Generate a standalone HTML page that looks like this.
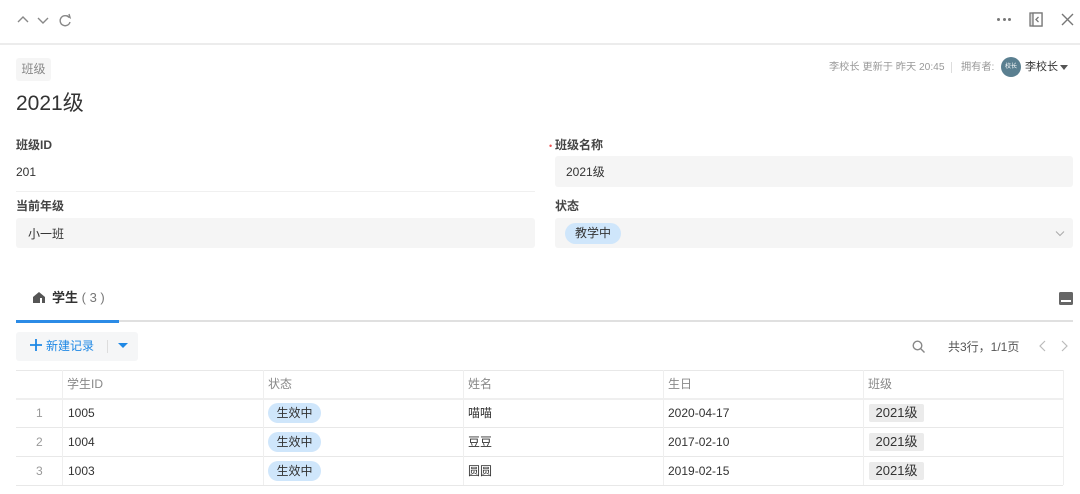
<!DOCTYPE html>
<html><head><meta charset="utf-8"><style>
*{margin:0;padding:0;box-sizing:border-box}
body{width:1080px;height:494px;background:#fff;font-family:"Liberation Sans","Noto Sans CJK SC",sans-serif;color:#333;position:relative;overflow:hidden;font-size:12px}
.a{position:absolute;line-height:14px;white-space:nowrap}
.lbl{font-size:12px;color:#444;font-weight:bold}
.box{background:#f5f5f5;border-radius:3px}
.pill{background:#cfe6fb;border-radius:11px;color:#333;text-align:center}
.gtag{background:#ebebeb;border-radius:2px;text-align:center;font-size:13px;color:#333}
.hl{position:absolute;left:16px;width:1047px;height:1px;background:#e8e8e8}
.vl{position:absolute;top:370px;height:115px;width:1px;background:#efefef}
</style></head><body>
<svg class="a" style="left:15px;top:12px" width="60" height="16" viewBox="0 0 60 16" fill="none" stroke="#888" stroke-width="1.4">
<path d="M3 10 L8 5 L13 10"/><path d="M23 6 L28 11 L33 6"/>
<path d="M54 5.5 A5 5 0 1 0 55 10" /><path d="M51.5 3.5 L55 5.5 L54 2"/>
</svg>
<div class="a" style="left:997px;top:18px;width:14px;height:4px;display:flex;justify-content:space-between"><i style="width:3px;height:3px;background:#777;border-radius:50%"></i><i style="width:3px;height:3px;background:#777;border-radius:50%"></i><i style="width:3px;height:3px;background:#777;border-radius:50%"></i></div>
<svg class="a" style="left:1029px;top:12px" width="14" height="15" viewBox="0 0 14 15" fill="none" stroke="#777" stroke-width="1.3"><rect x="1" y="1" width="12" height="13" fill="#ddd"/><rect x="4" y="1" width="9" height="13" fill="#fff"/><path d="M9.5 5 L7 7.5 L9.5 10"/></svg>
<svg class="a" style="left:1061px;top:13px" width="13" height="13" viewBox="0 0 13 13" stroke="#777" stroke-width="1.4"><path d="M1 1 L12 12 M12 1 L1 12"/></svg>
<div class="a" style="left:0;top:43px;width:1080px;height:2px;background:#ececec"></div>

<div class="a box" style="left:16px;top:58px;width:35px;height:23px;line-height:23px;text-align:center;color:#888;font-size:12px">班级</div>
<div class="a" style="left:16px;top:92px;font-size:21px;line-height:24px;color:#333">2021级</div>

<div class="a" style="left:829px;top:61px;font-size:10.2px;color:#999">李校长 更新于 昨天 20:45</div>
<div class="a" style="left:951px;top:62px;width:1px;height:11px;background:#ddd"></div>
<div class="a" style="left:961px;top:61px;font-size:10.2px;color:#999">拥有者:</div>
<div class="a" style="left:1001px;top:57px;width:20px;height:20px;border-radius:50%;background:#5a7f90;color:#fff;font-size:6px;line-height:20px;text-align:center">校长</div>
<div class="a" style="left:1025px;top:60px;font-size:11px;color:#333">李校长</div>
<div class="a" style="left:1060px;top:65px;border:4px solid transparent;border-top:5px solid #555"></div>

<div class="a lbl" style="left:16px;top:138px">班级ID</div>
<div class="a" style="left:16px;top:165px;color:#333">201</div>
<div class="a" style="left:16px;top:191px;width:519px;height:1px;background:#f0f0f0"></div>
<div class="a" style="left:549px;top:139px;color:#e55;font-size:9px">•</div>
<div class="a lbl" style="left:555px;top:138px">班级名称</div>
<div class="a box" style="left:555px;top:156px;width:518px;height:31px"></div>
<div class="a" style="left:566px;top:165px">2021级</div>

<div class="a lbl" style="left:16px;top:199px">当前年级</div>
<div class="a box" style="left:16px;top:218px;width:519px;height:30px"></div>
<div class="a" style="left:28px;top:227px">小一班</div>
<div class="a lbl" style="left:555px;top:199px">状态</div>
<div class="a box" style="left:555px;top:218px;width:518px;height:30px"></div>
<div class="a pill" style="left:565px;top:223px;width:56px;height:21px;line-height:21px;font-size:12px">教学中</div>
<svg class="a" style="left:1055px;top:230px" width="10" height="7" viewBox="0 0 10 7" fill="none" stroke="#aaa" stroke-width="1"><path d="M1 1.5 L5 5.5 L9 1.5"/></svg>

<svg class="a" style="left:33px;top:292px" width="12" height="11" viewBox="0 0 12 11"><path d="M6 0 L12 5 L12 11 L0 11 L0 5 Z" fill="#555"/><rect x="7" y="6" width="2" height="5" fill="#fff"/></svg>
<div class="a" style="left:52px;top:291px;font-size:13px;font-weight:bold;color:#333">学生 <span style="font-weight:normal;color:#777">( 3 )</span></div>
<svg class="a" style="left:1059px;top:292px" width="14" height="13" viewBox="0 0 14 13"><rect width="14" height="13" rx="1.5" fill="#666"/><rect x="2" y="8" width="10" height="2" fill="#fff"/></svg>
<div class="a" style="left:16px;top:320px;width:1057px;height:2px;background:#e0e0e0"></div>
<div class="a" style="left:16px;top:320px;width:103px;height:3px;background:#2b8be6"></div>

<div class="a" style="left:16px;top:332px;width:122px;height:29px;background:#f5f6f7;border-radius:3px"></div>
<svg class="a" style="left:30px;top:339px" width="12" height="12" viewBox="0 0 12 12" stroke="#1e88e5" stroke-width="1.8"><path d="M6 0 V12 M0 6 H12"/></svg>
<div class="a" style="left:46px;top:339px;color:#1e88e5;font-size:12px">新建记录</div>
<div class="a" style="left:107px;top:340px;width:1px;height:13px;background:#ddd"></div>
<div class="a" style="left:118px;top:343px;border:5px solid transparent;border-top:5px solid #1e88e5"></div>

<svg class="a" style="left:912px;top:340px" width="14" height="14" viewBox="0 0 14 14" fill="none" stroke="#888" stroke-width="1.4"><circle cx="5.5" cy="5.5" r="4.3"/><path d="M8.8 8.8 L12.5 12.5"/></svg>
<div class="a" style="left:948px;top:340px;color:#555">共3行，1/1页</div>
<svg class="a" style="left:1038px;top:340px" width="32" height="12" viewBox="0 0 32 12" fill="none" stroke="#bbb" stroke-width="1.2"><path d="M7 1 L2 6 L7 11"/><path d="M24 1 L29 6 L24 11"/></svg>

<div class="hl" style="top:370px"></div>
<div class="hl" style="top:398px;height:2px;background:#efefef"></div>
<div class="hl" style="top:427px"></div>
<div class="hl" style="top:456px"></div>
<div class="hl" style="top:485px"></div>
<div class="vl" style="left:62px"></div><div class="vl" style="left:263px"></div><div class="vl" style="left:463px"></div><div class="vl" style="left:663px"></div><div class="vl" style="left:863px"></div><div class="vl" style="left:1063px"></div>
<div class="a" style="left:67px;top:377px;color:#888">学生ID</div>
<div class="a" style="left:268px;top:377px;color:#888">状态</div>
<div class="a" style="left:468px;top:377px;color:#888">姓名</div>
<div class="a" style="left:668px;top:377px;color:#888">生日</div>
<div class="a" style="left:868px;top:377px;color:#888">班级</div>

<div class="a" style="left:36px;top:406px;color:#999">1</div>
<div class="a" style="left:68px;top:406px">1005</div>
<div class="a pill" style="left:268px;top:403px;width:53px;height:20px;line-height:20px">生效中</div>
<div class="a" style="left:468px;top:406px">喵喵</div>
<div class="a" style="left:668px;top:406px">2020-04-17</div>
<div class="a gtag" style="left:869px;top:404px;width:55px;height:18px;line-height:18px">2021级</div>

<div class="a" style="left:36px;top:435px;color:#999">2</div>
<div class="a" style="left:68px;top:435px">1004</div>
<div class="a pill" style="left:268px;top:432px;width:53px;height:20px;line-height:20px">生效中</div>
<div class="a" style="left:468px;top:435px">豆豆</div>
<div class="a" style="left:668px;top:435px">2017-02-10</div>
<div class="a gtag" style="left:869px;top:433px;width:55px;height:18px;line-height:18px">2021级</div>

<div class="a" style="left:36px;top:464px;color:#999">3</div>
<div class="a" style="left:68px;top:464px">1003</div>
<div class="a pill" style="left:268px;top:461px;width:53px;height:20px;line-height:20px">生效中</div>
<div class="a" style="left:468px;top:464px">圆圆</div>
<div class="a" style="left:668px;top:464px">2019-02-15</div>
<div class="a gtag" style="left:869px;top:462px;width:55px;height:18px;line-height:18px">2021级</div>
</body></html>
